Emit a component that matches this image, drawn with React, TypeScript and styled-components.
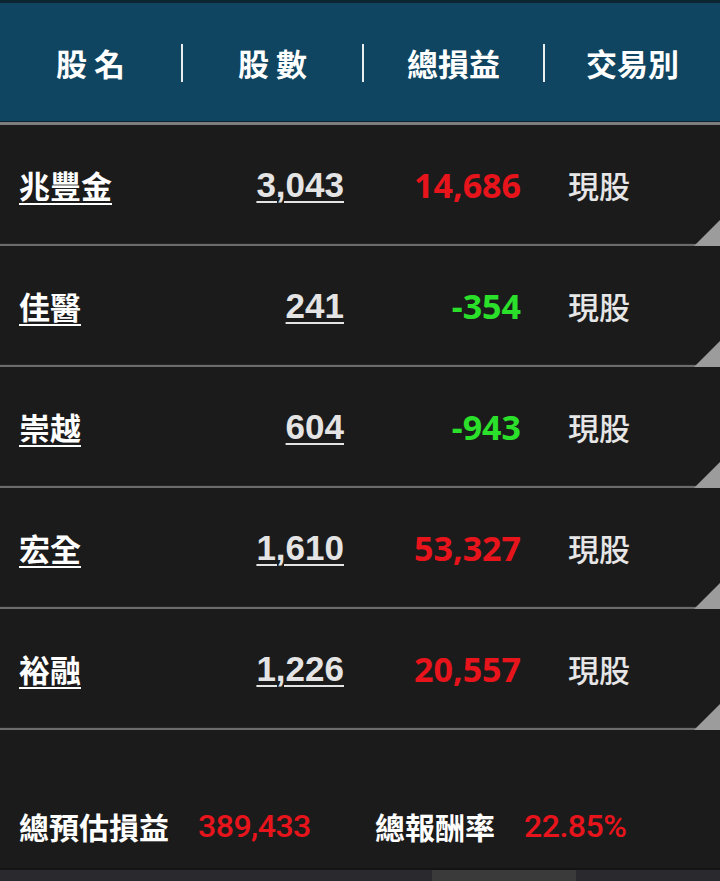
import React from "react";
import styled, { createGlobalStyle } from "styled-components";

const GlobalStyle = createGlobalStyle`
  html, body { margin: 0; padding: 0; background: #1b1b1b; }
  body { width: 720px; height: 881px; overflow: hidden; font-family: "Noto Sans CJK TC", "Noto Sans", sans-serif; }
  * { box-sizing: border-box; }
`;

const Page = styled.div`
  width: 720px;
  height: 881px;
  display: flex;
  flex-direction: column;
  background: #1b1b1b;
`;

const TopStrip = styled.div`
  height: 3px;
  background: #0b2631;
`;

const Header = styled.div`
  height: 122px;
  background: #0f4560;
  display: grid;
  grid-template-columns: 181px 181px 181px 1fr;
  align-items: center;
  border-bottom: 3px solid #7d7d7d;
  box-shadow: inset 0 -1px 0 #0a2530;
  position: relative;
`;

const HeadCell = styled.div<{ $sep?: boolean }>`
  height: 38px;
  display: flex;
  align-items: center;
  justify-content: center;
  color: #ffffff;
  font-family: "Noto Sans CJK TC", sans-serif;
  font-size: 31px;
  font-weight: 700;
  border-left: ${(p) => (p.$sep ? "2px solid #e8eef0" : "none")};
  white-space: pre;
`;

const Rows = styled.div`
  display: flex;
  flex-direction: column;
`;

const Row = styled.div`
  position: relative;
  height: 121px;
  display: grid;
  grid-template-columns: 181px 181px 181px 1fr;
  align-items: center;
  border-bottom: 2px solid #6c6c6c;
  box-shadow: inset 0 -1px 0 #262626;
`;

const Corner = styled.div`
  position: absolute;
  right: 0;
  bottom: -2px;
  width: 26px;
  height: 26px;
  background: #9c9c9c;
  clip-path: polygon(100% 0, 100% 100%, 0 100%);
`;

const NameCell = styled.div`
  padding-left: 19px;
`;

const NameLink = styled.span`
  color: #ffffff;
  font-family: "Noto Sans CJK TC", sans-serif;
  font-size: 31px;
  font-weight: 700;
  text-decoration: underline;
  text-decoration-thickness: 2px;
  text-underline-offset: 5px;
`;

const Shares = styled.div`
  text-align: right;
  padding-right: 18px;
  color: #e4e4e4;
  font-family: "Liberation Sans", Arial, sans-serif;
  font-size: 35px;
  font-weight: 700;
  text-decoration: underline;
  text-decoration-thickness: 2px;
  text-underline-offset: 4px;
`;

const Profit = styled.div<{ $up: boolean }>`
  text-align: right;
  padding-right: 22px;
  color: ${(p) => (p.$up ? "#e8141c" : "#2be02b")};
  font-family: "Noto Sans", sans-serif;
  font-size: 34px;
  font-weight: 700;
`;

const Kind = styled.div`
  padding-left: 25px;
  color: #e6e6e6;
  font-family: "Noto Sans CJK TC", sans-serif;
  font-size: 31px;
  font-weight: 500;
`;

const Footer = styled.div`
  flex: 1;
  display: flex;
  align-items: flex-start;
  padding: 74px 0 0 19px;
`;

const Stat = styled.div<{ $w?: number }>`
  display: flex;
  align-items: center;
  gap: 29px;
  width: ${(p) => (p.$w ? `${p.$w}px` : "auto")};
`;

const StatLabel = styled.span`
  color: #ffffff;
  font-family: "Noto Sans CJK TC", sans-serif;
  font-size: 30px;
  font-weight: 700;
`;

const StatValue = styled.span`
  color: #e8141c;
  font-family: Roboto, sans-serif;
  font-size: 32px;
  font-weight: 500;
  letter-spacing: -0.5px;
`;

const BottomBar = styled.div`
  height: 13px;
  background: #29292e;
  border-top: 2px solid #141414;
  display: flex;
  padding-left: 432px;
`;

const BottomThumb = styled.div`
  width: 144px;
  background: #3a3a3a;
`;

const data = [
  { name: "兆豐金", shares: "3,043", profit: "14,686", up: true },
  { name: "佳醫", shares: "241", profit: "-354", up: false },
  { name: "崇越", shares: "604", profit: "-943", up: false },
  { name: "宏全", shares: "1,610", profit: "53,327", up: true },
  { name: "裕融", shares: "1,226", profit: "20,557", up: true },
];

export default function App() {
  return (
    <Page>
      <GlobalStyle />
      <TopStrip />
      <Header>
        <HeadCell>股 名</HeadCell>
        <HeadCell $sep>股 數</HeadCell>
        <HeadCell $sep>總損益</HeadCell>
        <HeadCell $sep>交易別</HeadCell>
      </Header>
      <Rows>
        {data.map((d) => (
          <Row key={d.name}>
            <NameCell>
              <NameLink>{d.name}</NameLink>
            </NameCell>
            <Shares>{d.shares}</Shares>
            <Profit $up={d.up}>{d.profit}</Profit>
            <Kind>現股</Kind>
            <Corner />
          </Row>
        ))}
      </Rows>
      <Footer>
        <Stat $w={356}>
          <StatLabel>總預估損益</StatLabel>
          <StatValue>389,433</StatValue>
        </Stat>
        <Stat>
          <StatLabel>總報酬率</StatLabel>
          <StatValue>22.85%</StatValue>
        </Stat>
      </Footer>
      <BottomBar>
        <BottomThumb />
      </BottomBar>
    </Page>
  );
}
